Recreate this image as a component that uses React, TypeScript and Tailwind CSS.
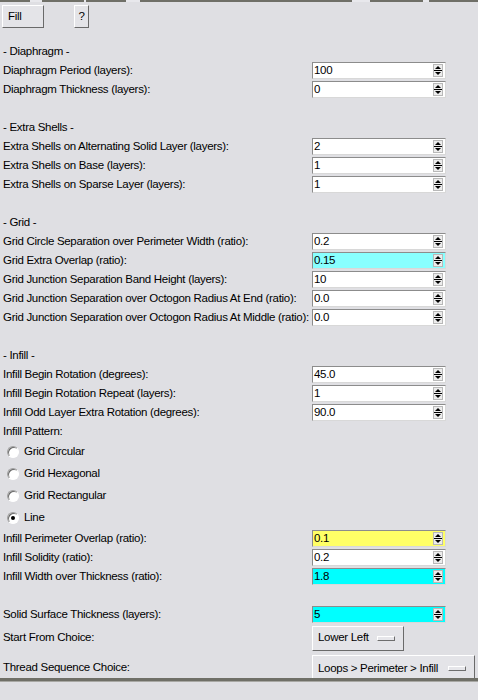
import React from 'react';

type Row =
  | { kind: 'blank' }
  | { kind: 'heading'; text: string }
  | { kind: 'spin'; label: string; value: string; tone?: 'cyan' | 'lightCyan' | 'yellow' }
  | { kind: 'label'; text: string }
  | { kind: 'radio'; text: string; checked?: boolean };

const rows: Row[] = [
  { kind: 'heading', text: '- Diaphragm -' },
  { kind: 'spin', label: 'Diaphragm Period (layers):', value: '100' },
  { kind: 'spin', label: 'Diaphragm Thickness (layers):', value: '0' },
  { kind: 'blank' },
  { kind: 'heading', text: '- Extra Shells -' },
  { kind: 'spin', label: 'Extra Shells on Alternating Solid Layer (layers):', value: '2' },
  { kind: 'spin', label: 'Extra Shells on Base (layers):', value: '1' },
  { kind: 'spin', label: 'Extra Shells on Sparse Layer (layers):', value: '1' },
  { kind: 'blank' },
  { kind: 'heading', text: '- Grid -' },
  { kind: 'spin', label: 'Grid Circle Separation over Perimeter Width (ratio):', value: '0.2' },
  { kind: 'spin', label: 'Grid Extra Overlap (ratio):', value: '0.15', tone: 'lightCyan' },
  { kind: 'spin', label: 'Grid Junction Separation Band Height (layers):', value: '10' },
  { kind: 'spin', label: 'Grid Junction Separation over Octogon Radius At End (ratio):', value: '0.0' },
  { kind: 'spin', label: 'Grid Junction Separation over Octogon Radius At Middle (ratio):', value: '0.0' },
  { kind: 'blank' },
  { kind: 'heading', text: '- Infill -' },
  { kind: 'spin', label: 'Infill Begin Rotation (degrees):', value: '45.0' },
  { kind: 'spin', label: 'Infill Begin Rotation Repeat (layers):', value: '1' },
  { kind: 'spin', label: 'Infill Odd Layer Extra Rotation (degrees):', value: '90.0' },
  { kind: 'label', text: 'Infill Pattern:' },
  { kind: 'radio', text: 'Grid Circular' },
  { kind: 'radio', text: 'Grid Hexagonal' },
  { kind: 'radio', text: 'Grid Rectangular' },
  { kind: 'radio', text: 'Line', checked: true },
  { kind: 'spin', label: 'Infill Perimeter Overlap (ratio):', value: '0.1', tone: 'yellow' },
  { kind: 'spin', label: 'Infill Solidity (ratio):', value: '0.2' },
  { kind: 'spin', label: 'Infill Width over Thickness (ratio):', value: '1.8', tone: 'cyan' },
  { kind: 'blank' },
  { kind: 'spin', label: 'Solid Surface Thickness (layers):', value: '5', tone: 'cyan' },
];

const SpinArrows = () => (
  <svg width="10" height="13" viewBox="0 0 10 13" className="shrink-0">
    <rect x="0.5" y="0.5" width="9" height="12" fill="#ececec" stroke="#b8b8b8" />
    <path d="M5 2 L8 5 L2 5 Z" fill="#000" />
    <line x1="1" y1="6.5" x2="9" y2="6.5" stroke="#000" />
    <path d="M2 8 L8 8 L5 11 Z" fill="#000" />
  </svg>
);

const SpinBox = ({ value, tone }: { value: string; tone?: 'cyan' | 'lightCyan' | 'yellow' }) => {
  const bg =
    tone === 'cyan' ? 'bg-[#00ffff]' : tone === 'lightCyan' ? 'bg-[#88ffff]' : tone === 'yellow' ? 'bg-[#ffff66]' : 'bg-white';
  return (
    <div className={`flex items-center w-[134px] h-[17px] ${bg} border-t border-l border-[#8c8c8c] border-b border-r border-b-[#d8d8d8] border-r-[#d8d8d8] pl-[1px] pr-[2px]`}>
      <span className="flex-1 leading-none">{value}</span>
      <SpinArrows />
    </div>
  );
};

const Radio = ({ checked }: { checked?: boolean }) => (
  <span className="relative w-[12px] h-[12px] rounded-full bg-white border border-t-[#a0a0a0] border-l-[#a0a0a0] border-b-white border-r-white shadow-[inset_1px_1px_0_#6a6a6a] flex items-center justify-center">
    {checked && <span className="w-[4px] h-[4px] rounded-full bg-black" />}
  </span>
);

const MenuIndicator = () => (
  <span className="inline-block shrink-0 w-[18px] h-[5px] bg-[#e6e6ea] border border-t-white border-l-white border-b-[#6e6e6e] border-r-[#6e6e6e]" />
);

export default function App() {
  return (
    <div className="w-[478px] h-[700px] bg-[#dfdfe3] text-black text-[11.5px] tracking-[-0.3px] font-['Tahoma','Liberation_Sans','DejaVu_Sans',sans-serif] overflow-hidden flex flex-col">
      {/* tab edges along the top */}
      <div className="flex h-[2px] shrink-0">
        <div className="w-[30px] bg-[#6f6f67]" />
        <div className="w-[12px] bg-[#e8e8ec]" />
        <div className="w-[42px] bg-[#6f6f67]" />
        <div className="w-[2px] bg-[#e8e8ec]" />
        <div className="w-[40px] bg-[#6f6f67]" />
        <div className="w-[14px] bg-[#e8e8ec]" />
        <div className="w-[212px] bg-[#6f6f67]" />
        <div className="w-[18px] bg-[#e8e8ec]" />
        <div className="w-[53px] bg-[#6f6f67]" />
        <div className="w-[6px] bg-[#e8e8ec]" />
        <div className="flex-1 bg-[#6f6f67]" />
      </div>

      {/* toolbar */}
      <div className="flex items-start h-[40px] shrink-0 pt-[3px] pl-[2px]">
        <button className="w-[42px] h-[23px] text-left pl-[5px] bg-[#e4e4e8] border border-t-white border-l-white border-b-[#6a6a6a] border-r-[#6a6a6a]">
          Fill
        </button>
        <button className="ml-[30px] w-[15px] h-[23px] bg-[#e4e4e8] border border-t-white border-l-white border-b-[#6a6a6a] border-r-[#6a6a6a]">
          ?
        </button>
      </div>

      {/* settings */}
      <div className="h-[636px] overflow-hidden shrink-0 pl-[3px]">
        {rows.map((row, i) => {
          if (row.kind === 'blank') return <div key={i} className="h-[19px]" />;
          if (row.kind === 'heading' || row.kind === 'label')
            return (
              <div key={i} className="h-[19px] flex items-center">
                {row.text}
              </div>
            );
          if (row.kind === 'radio')
            return (
              <div key={i} className="h-[22px] flex items-center gap-[5px] pl-[4px]">
                <Radio checked={row.checked} />
                <span>{row.text}</span>
              </div>
            );
          return (
            <div key={i} className="h-[19px] grid grid-cols-[309px_134px] items-center">
              <span className="whitespace-nowrap">{row.label}</span>
              <SpinBox value={row.value} tone={row.tone} />
            </div>
          );
        })}

        <div className="h-[28px] grid grid-cols-[309px_auto] items-center">
          <span>Start From Choice:</span>
          <button className="w-[92px] h-[25px] flex items-center gap-[8px] pl-[5px] whitespace-nowrap bg-[#e4e4e8] border border-t-white border-l-white border-b-[#6a6a6a] border-r-[#6a6a6a]">
            <span>Lower Left</span>
            <MenuIndicator />
          </button>
        </div>
        <div className="h-[30px] grid grid-cols-[309px_auto] items-center">
          <span className="mt-[1px]">Thread Sequence Choice:</span>
          <button className="mt-[3px] w-[163px] h-[27px] flex items-center gap-[10px] pl-[5px] whitespace-nowrap bg-[#e4e4e8] border border-t-white border-l-white border-b-[#6a6a6a] border-r-[#6a6a6a]">
            <span>Loops &gt; Perimeter &gt; Infill</span>
            <MenuIndicator />
          </button>
        </div>
      </div>

      {/* bottom separator */}
      <div className="h-[4px] shrink-0 bg-[#6f6f67] border-b border-[#a8a8a4]" />
      <div className="flex-1" />
    </div>
  );
}
